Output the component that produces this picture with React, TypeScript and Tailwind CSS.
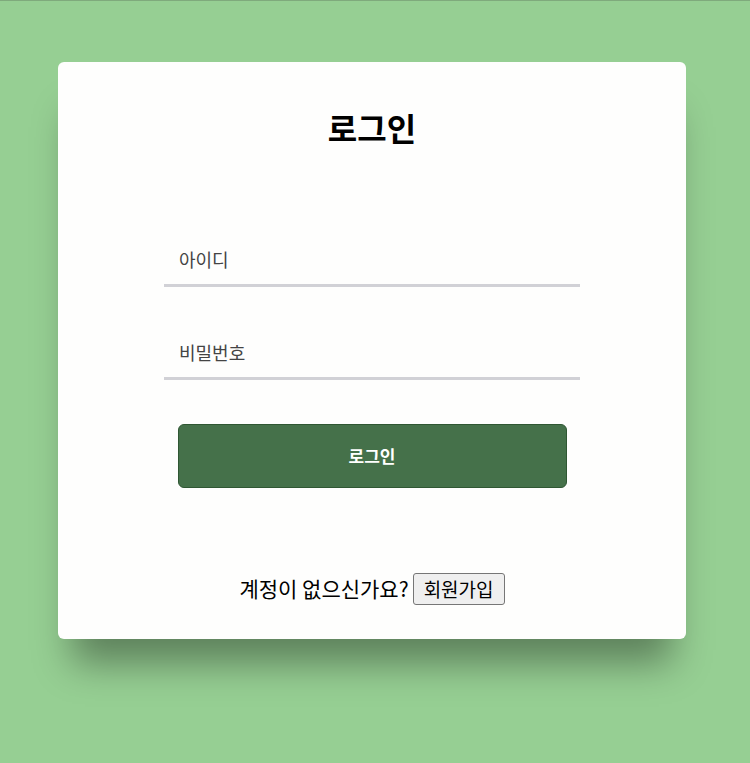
export default function App() {
  return (
    <div
      className="min-h-[763px] bg-[#96cf93] border-t border-[#7faa7c] pt-[61px] pl-[58px]"
      style={{ fontFamily: '"Noto Sans CJK KR", "Noto Sans", sans-serif' }}
    >
      <div className="w-[628px] h-[577px] rounded-[6px] bg-[#fefefd] shadow-[0_38px_36px_-14px_rgba(0,0,0,0.38)] flex flex-col items-center pt-[45px]">
        <h1 className="text-[32px] leading-[40px] font-bold text-black">로그인</h1>

        <form className="w-[416px] mt-[90px] flex flex-col items-center" onSubmit={(e) => e.preventDefault()}>
          <input
            type="text"
            placeholder="아이디"
            className="w-full h-[50px] pl-[15px] pb-[4px] text-[18px] text-[#333] placeholder:text-[#444] bg-transparent border-b-[3px] border-[#d1d1d6] outline-none"
          />
          <input
            type="password"
            placeholder="비밀번호"
            className="w-full h-[50px] mt-[43px] pl-[15px] pb-[4px] text-[18px] text-[#333] placeholder:text-[#444] bg-transparent border-b-[3px] border-[#d1d1d6] outline-none"
          />
          <button
            type="submit"
            className="w-[389px] h-[64px] mt-[44px] rounded-[6px] bg-[#45714a] border border-[#2f5733] text-white text-[17px] font-bold"
          >
            로그인
          </button>
        </form>

        <div className="mt-[85px] flex items-center gap-[4px] text-[21px] text-black">
          <span>계정이 없으신가요?</span>
          <button className="h-[32px] px-[10px] bg-[#efefef] border border-[#767676] rounded-[3px] text-[19px] text-black">
            회원가입
          </button>
        </div>
      </div>
    </div>
  );
}
